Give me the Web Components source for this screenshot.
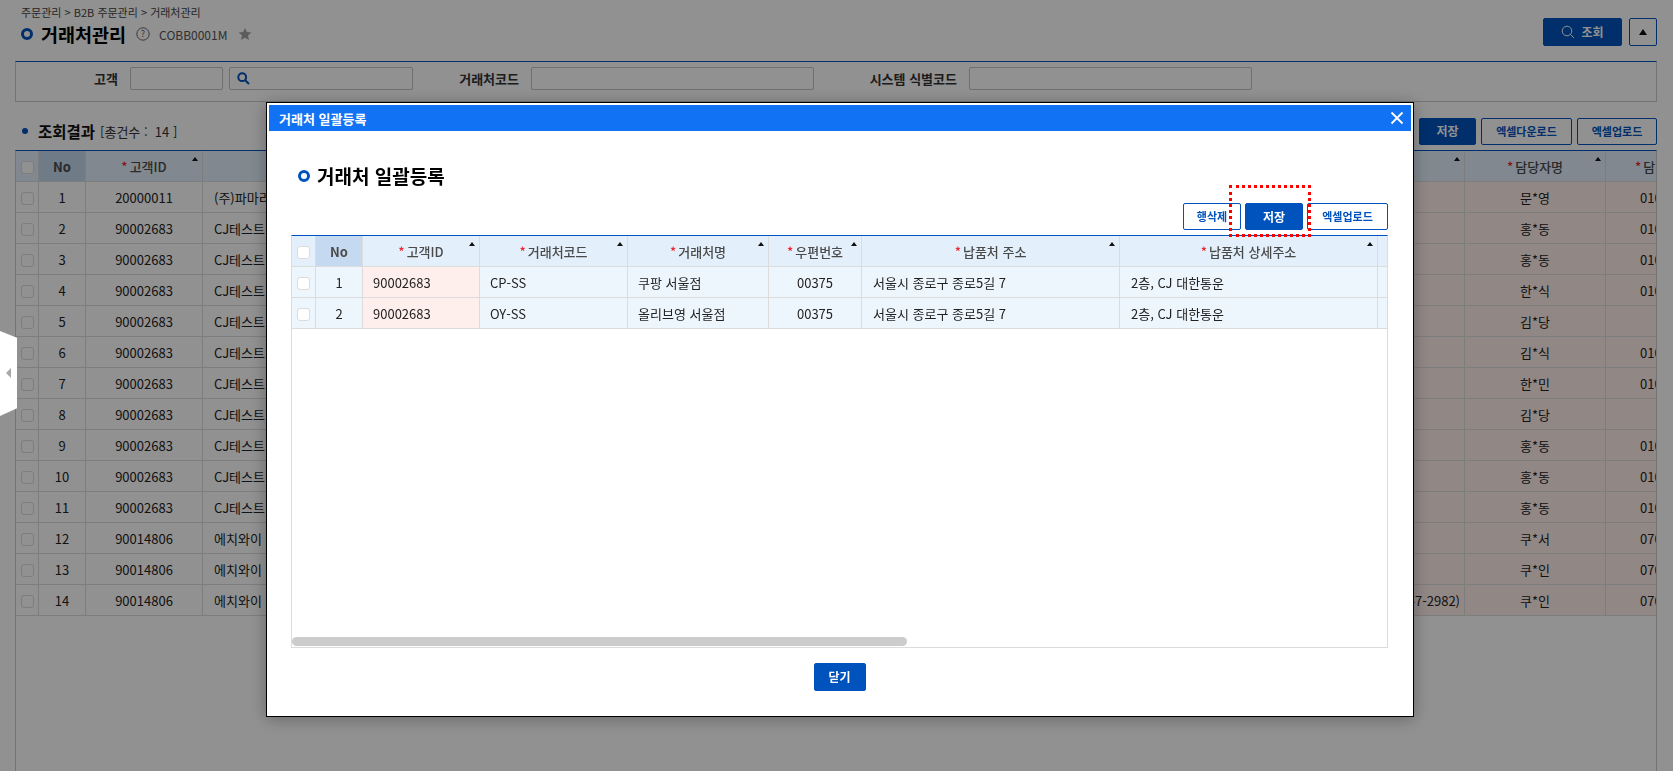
<!DOCTYPE html>
<html lang="ko">
<head>
<meta charset="utf-8" />
<title>거래처관리</title>
<style>
  html, body {
    margin: 0;
    height: 100%;
    overflow: hidden;
    background: #fff;
    font-family: "Noto Sans CJK KR", "Noto Sans", sans-serif;
    font-size: 13px;
    color: #222;
  }
</style>
</head>
<body>
<app-page></app-page>
<side-toggle></side-toggle>
<bulk-dialog></bulk-dialog>

<script>
const FONT = `"Noto Sans CJK KR", "Noto Sans", sans-serif`;
const BLUE = "#0053bd";

class UiButton extends HTMLElement {
  constructor() {
    super();
    this.attachShadow({ mode: "open" });
    this.shadowRoot.innerHTML = `
      <style>
        :host {
          display: inline-flex;
          align-items: center;
          justify-content: center;
          gap: 6px;
          box-sizing: border-box;
          height: 27px;
          border: 1px solid ${BLUE};
          border-radius: 2px;
          background: #fff;
          color: ${BLUE};
          font: 700 11px/1 ${FONT};
        }
        :host([primary]) {
          background: ${BLUE};
          color: #fff;
          font-size: 12px;
        }
      </style>
      <slot></slot>
    `;
  }
}
customElements.define("ui-button", UiButton);

class UiRing extends HTMLElement {
  constructor() {
    super();
    this.attachShadow({ mode: "open" });
    this.shadowRoot.innerHTML = `
      <style>
        :host {
          display: inline-block;
          box-sizing: border-box;
          width: 12px;
          height: 12px;
          border: 3px solid ${BLUE};
          border-radius: 50%;
          background: #fff;
          flex: none;
        }
      </style>
    `;
  }
}
customElements.define("ui-ring", UiRing);

class DataGrid extends HTMLElement {
  constructor() {
    super();
    this.attachShadow({ mode: "open" });
  }

  // columns: { w, label, req, sort, no, bg, align, pad }
  render(columns, rows) {
    const head = columns
      .map((c) => {
        const star = c.req ? `<i>*</i>` : "";
        const arrow = c.sort ? `<b class="sort"></b>` : "";
        const box = c.check ? `<span class="chk"></span>` : "";
        const cls = c.no ? "no" : "";
        const pad = c.headPad ? `text-align:left;padding-left:${c.headPad}px` : "";
        return `<th class="${cls}" style="${pad}">${box}${star}${c.label || ""}${arrow}</th>`;
      })
      .join("");
    const body = rows
      .map((r) => {
        const tds = columns.map((c, i) => {
          const style = [
            c.bg ? `background:${c.bg}` : "",
            `text-align:${c.align || "center"}`,
            c.pad ? `padding-left:${c.pad}px` : "",
            c.padR ? `padding-right:${c.padR}px` : "",
          ].join(";");
          const inner = c.check ? `<span class="chk"></span>` : r[i] || "";
          return `<td style="${style}">${inner}</td>`;
        });
        return `<tr>${tds.join("")}</tr>`;
      })
      .join("");
    this.shadowRoot.innerHTML = `
      <style>
        :host {
          display: block;
          overflow: hidden;
          font: 13px ${FONT};
        }
        table {
          border-collapse: separate;
          border-spacing: 0;
          table-layout: fixed;
          width: ${columns.reduce((n, c) => n + c.w, 0)}px;
        }
        th, td {
          box-sizing: border-box;
          height: 31px;
          padding: 0;
          border-right: 1px solid #dcdcdc;
          border-bottom: 1px solid #dcdcdc;
          white-space: nowrap;
          overflow: hidden;
          background: var(--row-bg, #fff);
          color: #222;
          font-weight: 400;
        }
        th {
          position: relative;
          background: #e3f0fc;
          color: #4a4a4a;
          font-weight: 500;
          text-align: center;
        }
        th.no {
          background: #c5d9f0;
          font-weight: 700;
        }
        th i {
          color: #ec2330;
          font-style: normal;
          margin-right: 2px;
        }
        .sort {
          position: absolute;
          top: 6px;
          right: 4px;
          border-left: 3px solid transparent;
          border-right: 3px solid transparent;
          border-bottom: 4px solid #111;
        }
        .chk {
          display: inline-block;
          box-sizing: border-box;
          width: 13px;
          height: 13px;
          border: 1px solid #dcdcdc;
          border-radius: 3px;
          background: #fff;
          vertical-align: middle;
        }
      </style>
      <table>
        <colgroup>${columns.map((c) => `<col style="width:${c.w}px">`).join("")}</colgroup>
        <thead><tr>${head}</tr></thead>
        <tbody>${body}</tbody>
      </table>
    `;
  }
}
customElements.define("data-grid", DataGrid);

class SideToggle extends HTMLElement {
  constructor() {
    super();
    this.attachShadow({ mode: "open" });
    this.shadowRoot.innerHTML = `
      <style>
        :host {
          position: fixed;
          left: 0;
          top: 331px;
          width: 17px;
          height: 85px;
          z-index: 5;
          display: flex;
          align-items: center;
          justify-content: center;
          background: #fff;
          clip-path: polygon(0 0, 100% 8%, 100% 91%, 0 100%);
        }
        span {
          border-top: 5px solid transparent;
          border-bottom: 5px solid transparent;
          border-right: 5px solid #a8a8a8;
          margin-top: -1px;
        }
      </style>
      <span></span>
    `;
  }
}
customElements.define("side-toggle", SideToggle);

class AppPage extends HTMLElement {
  constructor() {
    super();
    this.attachShadow({ mode: "open" });
    this.shadowRoot.innerHTML = `
      <style>
        :host {
          display: flex;
          flex-direction: column;
          box-sizing: border-box;
          height: 771px;
          padding: 0 16px 0 15px;
          font: 13px ${FONT};
          color: #222;
        }
        .head {
          display: flex;
          justify-content: space-between;
          height: 61px;
          flex: none;
        }
        .crumb {
          margin: 4px 0 0 6px;
          font-size: 11px;
          line-height: 16px;
          color: #444;
        }
        .title {
          display: flex;
          align-items: center;
          height: 28px;
          margin: 0 0 0 6px;
          font-size: 18px;
          font-weight: 700;
          color: #000;
        }
        .title h1 {
          margin: 0 10px 0 8px;
          font-size: 18.5px;
          line-height: 28px;
        }
        .title small {
          margin: 0 11px 0 9px;
          font-size: 12px;
          font-weight: 400;
          color: #555;
        }
        .tools {
          display: flex;
          gap: 7px;
          padding-top: 18px;
        }
        .tools ui-button { height: 28px; }
        .find { width: 79px; }
        .up { width: 28px; }
        .up span {
          border-left: 4px solid transparent;
          border-right: 4px solid transparent;
          border-bottom: 6px solid #111;
        }
        .search {
          display: flex;
          align-items: center;
          box-sizing: border-box;
          height: 41px;
          padding-bottom: 11px;
          padding-top: 4px;
          flex: none;
          border: 1px solid #ccc;
          border-top-color: ${BLUE};
        }
        .search label {
          flex: none;
          margin-right: 12px;
          font-weight: 700;
          text-align: right;
          color: #333;
        }
        .field {
          flex: none;
          box-sizing: border-box;
          height: 23px;
          border: 1px solid #c4c4c4;
          border-radius: 2px;
          background: #fff;
          display: flex;
          align-items: center;
          padding-left: 7px;
        }
        .result {
          display: flex;
          align-items: center;
          justify-content: space-between;
          flex: none;
          height: 26px;
          margin: 16px 0 6px;
        }
        .result .left {
          display: flex;
          align-items: center;
          padding-left: 7px;
        }
        .dot {
          width: 6px;
          height: 6px;
          border-radius: 50%;
          background: ${BLUE};
          margin-right: 10px;
        }
        .result strong { font-size: 15.5px; color: #111; }
        .result em {
          margin-left: 5px;
          font-style: normal;
          color: #333;
          white-space: pre;
        }
        .btns { display: flex; gap: 5px; }
        .frame {
          flex: 1;
          border-left: 1px solid #ccc;
          border-right: 1px solid #ccc;
          border-top: 1px solid ${BLUE};
          min-height: 0;
        }
        .frame data-grid { width: 1640px; }
      </style>
      <div class="head">
        <div>
          <div class="crumb">주문관리 &gt; B2B 주문관리 &gt; 거래처관리</div>
          <div class="title">
            <ui-ring></ui-ring>
            <h1>거래처관리</h1>
            <svg width="14" height="14" viewBox="0 0 14 14">
              <circle cx="7" cy="7" r="6.2" fill="none" stroke="#666" stroke-width="1"/>
              <text x="7" y="10.2" font-size="9" font-weight="400" fill="#666" text-anchor="middle">?</text>
            </svg>
            <small>COBB0001M</small>
            <svg width="14" height="14" viewBox="0 0 24 24">
              <path d="M12 1.5l3.2 7.1 7.8.8-5.8 5.2 1.6 7.7L12 18.4l-6.8 3.9 1.6-7.7L1 9.4l7.8-.8z" fill="#a4a4a4"/>
            </svg>
          </div>
        </div>
        <div class="tools">
          <ui-button primary class="find">
            <svg width="14" height="14" viewBox="0 0 14 14" fill="none" stroke="#fff" stroke-width="1">
              <circle cx="6" cy="6" r="4.8"/><path d="M9.5 9.5L13 13"/>
            </svg>
            조회
          </ui-button>
          <ui-button class="up"><span></span></ui-button>
        </div>
      </div>
      <div class="search">
        <label style="width:102px">고객</label>
        <span class="field" style="width:93px"></span>
        <span class="field" style="width:184px;margin-left:6px">
          <svg width="13" height="13" viewBox="0 0 13 13" fill="none" stroke="${BLUE}" stroke-width="2">
            <circle cx="5.2" cy="5.2" r="3.9"/><path d="M8.2 8.2L12 12"/>
          </svg>
        </span>
        <label style="width:106px">거래처코드</label>
        <span class="field" style="width:283px"></span>
        <label style="width:143px">시스템 식별코드</label>
        <span class="field" style="width:283px"></span>
      </div>
      <div class="result">
        <div class="left">
          <span class="dot"></span>
          <strong>조회결과</strong>
          <em>[총건수 :  14 ]</em>
        </div>
        <div class="btns">
          <ui-button style="width:60px">행추가</ui-button>
          <ui-button primary style="width:57px">저장</ui-button>
          <ui-button style="width:91px">엑셀다운로드</ui-button>
          <ui-button style="width:80px">엑셀업로드</ui-button>
        </div>
      </div>
      <div class="frame"><data-grid></data-grid></div>
    `;

    const pink = "#ffefec";
    const names = ["문*영", "홍*동", "홍*동", "한*식", "김*당", "김*식", "한*민", "김*당", "홍*동", "홍*동", "홍*동", "쿠*서", "쿠*인", "쿠*인"];
    const phones = ["010", "010", "010", "010", "", "010", "010", "", "010", "010", "010", "070", "070", "070"];
    const rows = names.map((name, i) => {
      const id = i === 0 ? "20000011" : i < 11 ? "90002683" : "90014806";
      const who = i === 0 ? "(주)파마리" : i < 11 ? "CJ테스트" : "에치와이";
      return ["", String(i + 1), id, who, "", i === 13 ? "(02-547-2982)" : "", name, phones[i]];
    });
    this.shadowRoot.querySelector("data-grid").render(
      [
        { w: 23, check: true },
        { w: 47, label: "No", no: true },
        { w: 117, label: "고객ID", req: true, sort: true },
        { w: 700, align: "left", pad: 11 },
        { w: 200, bg: pink },
        { w: 362, bg: pink, sort: true, align: "right", padR: 4 },
        { w: 141, label: "담당자명", req: true, sort: true, bg: pink },
        { w: 52, label: "담", req: true, headPad: 29, bg: pink, align: "left", pad: 34 },
      ],
      rows
    );
  }
}
customElements.define("app-page", AppPage);

class BulkDialog extends HTMLElement {
  constructor() {
    super();
    this.attachShadow({ mode: "open" });
    this.shadowRoot.innerHTML = `
      <style>
        :host {
          position: fixed;
          inset: 0;
          z-index: 4;
          background: rgba(0, 0, 0, 0.43);
          font: 13px ${FONT};
          color: #222;
        }
        .box {
          position: absolute;
          left: 266px;
          top: 102px;
          width: 1148px;
          height: 615px;
          box-sizing: border-box;
          display: flex;
          flex-direction: column;
          padding: 2px;
          border: 1px solid #000;
          background: #fff;
          box-shadow: 0 2px 16px rgba(0, 0, 0, 0.3);
        }
        .bar {
          display: flex;
          align-items: center;
          justify-content: space-between;
          flex: none;
          height: 26px;
          padding: 0 7px 0 10px;
          background: #1172f4;
          color: #fff;
          font-size: 13px;
          font-weight: 700;
        }
        .body {
          flex: 1;
          display: flex;
          flex-direction: column;
          padding: 32px 23px 0 22px;
        }
        h2 {
          display: flex;
          align-items: center;
          gap: 7px;
          height: 26px;
          margin: 0 0 14px 7px;
          font-size: 19px;
          line-height: 26px;
          color: #000;
        }
        .btns {
          display: flex;
          justify-content: flex-end;
          gap: 4px;
          margin-bottom: 5px;
        }
        .list {
          display: flex;
          flex-direction: column;
          height: 413px;
          box-sizing: border-box;
          border: 1px solid #dcdcdc;
          border-top: 1px solid ${BLUE};
          --row-bg: #eef6fd;
        }
        .list data-grid { flex: 1; }
        .thumb {
          width: 615px;
          height: 9px;
          margin-bottom: 1px;
          border-radius: 5px;
          background: #ccc;
        }
        .foot {
          display: flex;
          justify-content: center;
          margin-top: 15px;
        }
        .mark {
          position: absolute;
          left: 962px;
          top: 82px;
          width: 82px;
          height: 52px;
          box-sizing: border-box;
          border: 3px dotted #f00;
        }
      </style>
      <div class="box" role="dialog">
        <div class="bar">
          거래처 일괄등록
          <svg width="14" height="14" viewBox="0 0 14 14" stroke="#fff" stroke-width="1.8">
            <path d="M1.5 1.5l11 11M12.5 1.5l-11 11"/>
          </svg>
        </div>
        <div class="body">
          <h2><ui-ring></ui-ring>거래처 일괄등록</h2>
          <div class="btns">
            <ui-button style="width:58px">행삭제</ui-button>
            <ui-button primary style="width:58px">저장</ui-button>
            <ui-button style="width:81px">엑셀업로드</ui-button>
          </div>
          <div class="list">
            <data-grid></data-grid>
            <div class="thumb"></div>
          </div>
          <div class="foot">
            <ui-button primary style="width:52px;height:28px">닫기</ui-button>
          </div>
        </div>
        <div class="mark"></div>
      </div>
    `;

    const pink = "#ffefec";
    this.shadowRoot.querySelector("data-grid").render(
      [
        { w: 24, check: true },
        { w: 47, label: "No", no: true },
        { w: 117, label: "고객ID", req: true, sort: true, bg: pink, align: "left", pad: 10 },
        { w: 148, label: "거래처코드", req: true, sort: true, align: "left", pad: 10 },
        { w: 141, label: "거래처명", req: true, sort: true, align: "left", pad: 10 },
        { w: 93, label: "우편번호", req: true, sort: true },
        { w: 258, label: "납품처 주소", req: true, sort: true, align: "left", pad: 11 },
        { w: 258, label: "납품처 상세주소", req: true, sort: true, align: "left", pad: 11 },
        { w: 10 },
      ],
      [
        ["", "1", "90002683", "CP-SS", "쿠팡 서울점", "00375", "서울시 종로구 종로5길 7", "2층, CJ 대한통운", ""],
        ["", "2", "90002683", "OY-SS", "올리브영 서울점", "00375", "서울시 종로구 종로5길 7", "2층, CJ 대한통운", ""],
      ]
    );
  }
}
customElements.define("bulk-dialog", BulkDialog);
</script>
</body>
</html>
